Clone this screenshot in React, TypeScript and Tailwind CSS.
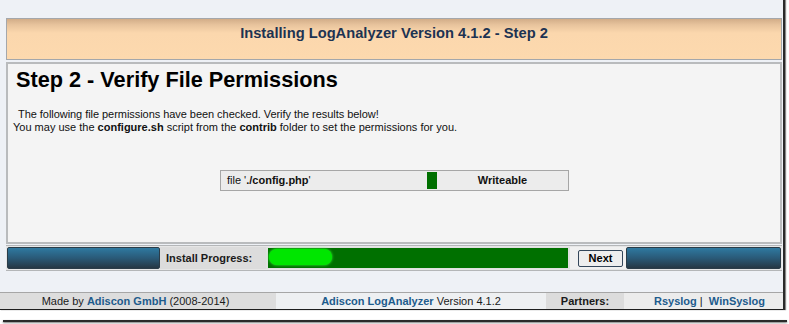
import React from "react";

export default function App() {
  return (
    <div
      className="w-[789px] h-[324px] bg-white relative overflow-hidden"
      style={{ fontFamily: '"Liberation Sans", Arial, sans-serif' }}
    >
      <div className="w-[785px] h-[310px] bg-[#eef1f6] border-r-2 border-[#2a2a2a] flex flex-col shadow-[1px_0_1px_#888]">
        {/* header */}
        <div className="mt-[18px] ml-[6px] w-[776px] h-[42px] border border-[#a4a7ab] bg-[linear-gradient(to_bottom,#d2ad88_0px,#e8c49d_6px,#fbd7ad_14px,#fdd9ae_100%)] flex justify-center pt-[4px]">
          <span className="text-[14.7px] font-bold text-[#1d3352] leading-[20px]">
            Installing LogAnalyzer Version 4.1.2 - Step 2
          </span>
        </div>
        {/* main */}
        <div className="mt-[2px] ml-[6px] w-[776px] h-[183px] border-2 border-[#b9bbbd] bg-[#f4f4f4] flex flex-col">
          <h1 className="ml-[8px] mt-[2px] text-[21.7px] font-bold text-black leading-[27px]">
            Step 2 - Verify File Permissions
          </h1>
          <div className="mt-[15px] text-[11px] leading-[13px] text-[#111]">
            <div className="ml-[10px] tracking-[-0.05px]">The following file permissions have been checked. Verify the results below!</div>
            <div className="ml-[5px]">
              You may use the <b>configure.sh</b> script from the <b>contrib</b> folder to set the permissions for you.
            </div>
          </div>
          <div className="mt-[36px] ml-[212px] w-[349px] h-[21px] border border-[#a6a6a6] bg-[#ececec] flex text-[11px] text-[#111]">
            <div className="w-[206px] pl-[6px] flex items-center">
              file '<b>./config.php</b>'
            </div>
            <div className="w-[10px] my-[1px] bg-[#007000]" />
            <div className="flex-1 flex items-center justify-center font-bold">Writeable</div>
          </div>
        </div>
        {/* progress row */}
        <div className="mt-[1px] ml-[6px] w-[776px] h-[26px] border-y border-[#b4b6b8] bg-[#e6e6e6] flex items-stretch py-[1px] px-[1px]">
          <div className="w-[153px] rounded-[2px] border border-[#2b3c48] bg-[linear-gradient(to_bottom,#2f79a0,#2a5a78_50%,#263744)]" />
          <div className="w-[106px] bg-[#dcdcdc] flex items-center pl-[6px] text-[11px] font-bold text-[#1a1a1a]">
            Install Progress:
          </div>
          <div className="w-[304px] bg-[#e0e0e0] flex items-stretch py-[1px] pl-[2px] pr-[2px]">
            <div className="flex-1 bg-[#007000] relative">
              <div className="absolute left-[1px] top-[1px] w-[63px] h-[16px] rounded-[8px] bg-[#00e600] shadow-[0_0_3px_#33ff33]" />
            </div>
          </div>
          <div className="w-[56px] bg-[#f0f0f0] flex items-center justify-end pr-[3px]">
            <div className="w-[45px] h-[17px] border border-[#34465a] rounded-[2px] bg-[#eeeeee] flex items-center justify-center text-[11px] font-bold text-black">
              Next
            </div>
          </div>
          <div className="flex-1 rounded-[2px] border border-[#2b3c48] bg-[linear-gradient(to_bottom,#2f79a0,#2a5a78_50%,#263744)]" />
        </div>
        {/* footer */}
        <div className="mt-[21px] h-[18px] border-t border-[#a6a6a6] border-b border-b-[#1e1e1e] flex text-[11px] text-[#1a1a1a]">
          <div className="w-[276px] bg-[#dddddd] flex items-center justify-center pr-[5px]">
            Made by&nbsp;<b className="text-[#1d5b8c]">Adiscon GmbH</b>&nbsp;(2008-2014)
          </div>
          <div className="w-[270px] bg-[#eef0f2] flex items-center justify-center">
            <b className="text-[#1d5b8c]">Adiscon LogAnalyzer</b>&nbsp;Version 4.1.2
          </div>
          <div className="w-[78px] bg-[#dcdcdc] flex items-center justify-center font-bold">Partners:</div>
          <div className="flex-1 bg-[#ececec] flex items-center justify-center pl-[12px]">
            <b className="text-[#1d5b8c]">Rsyslog</b>&nbsp;|&nbsp;&nbsp;<b className="text-[#1d5b8c]">WinSyslog</b>
          </div>
        </div>
      </div>
      <div className="absolute left-[3px] top-[320px] w-[784px] h-[2px] bg-[#2a2a2a] shadow-[0_1px_2px_#777]" />
    </div>
  );
}
